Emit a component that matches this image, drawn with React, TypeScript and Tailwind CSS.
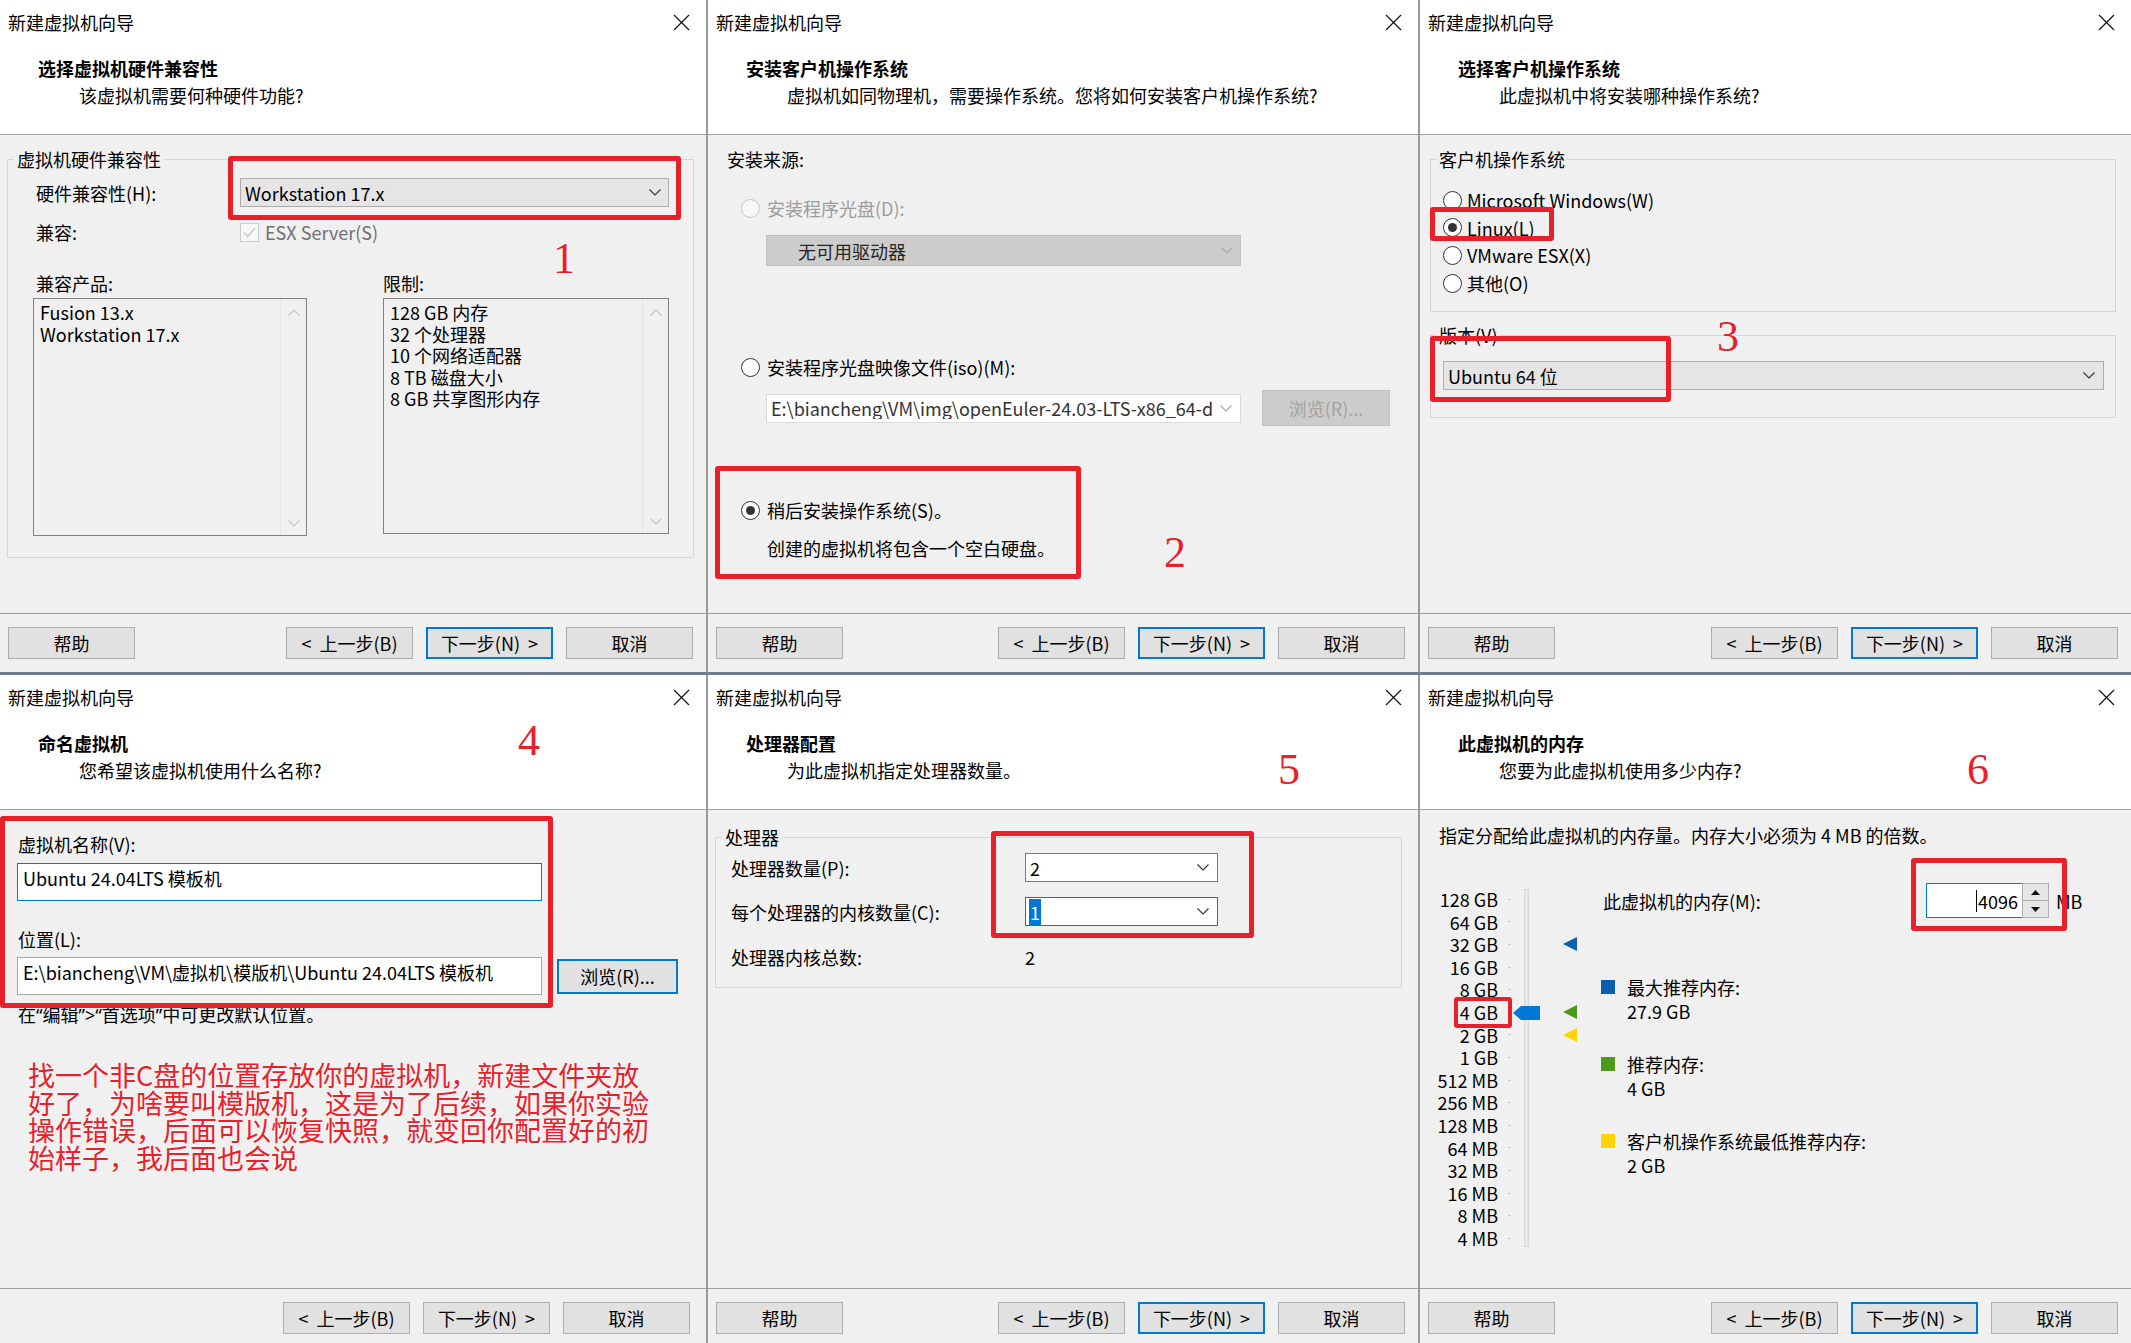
import React from "react";

// annotation red used for boxes, digits and the note
const RED = "#e8202a";

function CloseIcon() {
  return (
    <svg width="17" height="17" viewBox="0 0 17 17" className="shrink-0">
      <path d="M1 1L16 16M16 1L1 16" stroke="#111" strokeWidth="1.2" />
    </svg>
  );
}

function Chevron({ color = "#333", up = false }: { color?: string; up?: boolean }) {
  return (
    <svg width="12" height="7" viewBox="0 0 12 7" className={up ? "rotate-180" : ""}>
      <path d="M0.5 0.5L6 6L11.5 0.5" fill="none" stroke={color} strokeWidth="1.1" />
    </svg>
  );
}

function Btn({
  children,
  focused = false,
  disabled = false,
  className = "w-[127px] h-[32px]",
}: {
  children: React.ReactNode;
  focused?: boolean;
  disabled?: boolean;
  className?: string;
}) {
  const look = focused
    ? "border-2 border-[#0078d7] bg-[#e1e1e1] text-black"
    : disabled
    ? "border border-[#bfbfbf] bg-[#cccccc] text-[#a3a3a3]"
    : "border border-[#adadad] bg-[#e1e1e1] text-black";
  return (
    <div className={`flex shrink-0 items-center justify-center whitespace-pre text-[18px] leading-none ${look} ${className}`}>
      {children}
    </div>
  );
}

function Radio({ checked = false, disabled = false }: { checked?: boolean; disabled?: boolean }) {
  return (
    <span
      className={`flex h-[19px] w-[19px] shrink-0 items-center justify-center rounded-full border ${
        disabled ? "border-[#c6c6c6] bg-[#f7f7f7]" : "border-[#333333] bg-white"
      }`}
    >
      {checked && <span className="h-[9px] w-[9px] rounded-full bg-[#333333]" />}
    </span>
  );
}

function Dropdown({
  text,
  className,
}: {
  text: React.ReactNode;
  className: string;
}) {
  return (
    <div className={`flex shrink-0 items-center justify-between leading-[22px] ${className}`}>
      <span className="whitespace-nowrap">{text}</span>
      <Chevron />
    </div>
  );
}

function Listbox({ lines, className }: { lines: string[]; className: string }) {
  return (
    <div className={`flex border border-[#828282] bg-[#f0f0f0] ${className}`}>
      <div className="flex-1 pl-[6px] pt-[3px] leading-[21.6px]">
        {lines.map((l) => (
          <div key={l} className="whitespace-nowrap">
            {l}
          </div>
        ))}
      </div>
      <div className="flex w-[26px] flex-col items-center justify-between border-l border-[#e4e4e4] pb-[8px] pt-[10px]">
        <Chevron up color="#c4c4c4" />
        <Chevron color="#c4c4c4" />
      </div>
    </div>
  );
}

function Box({ className }: { className: string }) {
  return <div className={`pointer-events-none absolute rounded-[3px] border-[#e8202a] ${className}`} />;
}

function Num({ n, className }: { n: string; className: string }) {
  return (
    <div
      className={`absolute font-['Liberation_Serif',serif] text-[44px] leading-[44px] text-[#e8202a] [text-shadow:0_0_2px_#fff,0_0_1px_#fff] ${className}`}
    >
      {n}
    </div>
  );
}

function Wizard({
  heading,
  sub,
  children,
  marks,
  help = true,
  nextFocused = true,
}: {
  heading: string;
  sub: string;
  children: React.ReactNode;
  marks?: React.ReactNode;
  help?: boolean;
  nextFocused?: boolean;
}) {
  return (
    <div className="relative flex h-full flex-col overflow-hidden bg-[#f0f0f0]">
      <div className="h-[135px] shrink-0 border-b border-[#a0a0a0] bg-white">
        <div className="flex h-[44px] items-center justify-between pl-[8px] pr-[16px]">
          <span className="leading-[24px]">新建虚拟机向导</span>
          <CloseIcon />
        </div>
        <div className="mt-[12px] pl-[38px] font-bold leading-[24px]">{heading}</div>
        <div className="mt-[3px] pl-[79px] leading-[24px]">{sub}</div>
      </div>
      <div className="relative h-[478px] shrink-0">{children}</div>
      <div
        className={`flex flex-1 items-start border-t border-[#a0a0a0] pt-[13px] ${
          help ? "justify-between pl-[8px] pr-[13px]" : "justify-end pr-[16px]"
        }`}
      >
        {help && <Btn>帮助</Btn>}
        <div className="flex gap-[13px]">
          <Btn>{"<  上一步(B)"}</Btn>
          <Btn focused={nextFocused}>{"下一步(N)  >"}</Btn>
          <Btn>取消</Btn>
        </div>
      </div>
      {marks}
    </div>
  );
}

function Compat() {
  return (
    <Wizard
      heading="选择虚拟机硬件兼容性"
      sub="该虚拟机需要何种硬件功能?"
      marks={
        <>
          <Box className="left-[228px] top-[156px] h-[64px] w-[453px] border-[5px]" />
          <Num n="1" className="left-[553px] top-[237px]" />
        </>
      }
    >
      <fieldset className="ml-[7px] mr-[12px] mt-[14px] border border-[#d5d5d5] pb-[21px]">
        <legend className="ml-[6px] px-[3px] leading-[20px]">虚拟机硬件兼容性</legend>
        <div className="mt-[9px] flex h-[29px] items-center pl-[28px]">
          <span className="w-[204px] shrink-0">硬件兼容性(H):</span>
          <Dropdown
            text="Workstation 17.x"
            className="h-[29px] w-[429px] border border-[#adadad] bg-[#e5e5e5] pl-[4px] pr-[7px]"
          />
        </div>
        <div className="mt-[15px] flex h-[20px] items-center pl-[28px]">
          <span className="w-[204px] shrink-0">兼容:</span>
          <span className="flex h-[19px] w-[19px] items-center justify-center border border-[#cccccc] bg-[#f7f7f7]">
            <svg width="13" height="11" viewBox="0 0 13 11">
              <path d="M1 5.5L4.8 9.5L12 1" fill="none" stroke="#c5c5c5" strokeWidth="1.3" />
            </svg>
          </span>
          <span className="ml-[6px] text-[#707070]">ESX Server(S)</span>
        </div>
        <div className="mt-[31px] flex pl-[25px]">
          <div className="w-[274px]">
            <div className="pl-[3px] leading-[20px]">兼容产品:</div>
            <Listbox className="mt-[5px] h-[238px]" lines={["Fusion 13.x", "Workstation 17.x"]} />
          </div>
          <div className="ml-[76px] w-[286px]">
            <div className="leading-[20px]">限制:</div>
            <Listbox
              className="mt-[5px] h-[236px]"
              lines={["128 GB 内存", "32 个处理器", "10 个网络适配器", "8 TB 磁盘大小", "8 GB 共享图形内存"]}
            />
          </div>
        </div>
      </fieldset>
    </Wizard>
  );
}

function InstallSource() {
  return (
    <Wizard
      heading="安装客户机操作系统"
      sub="虚拟机如同物理机，需要操作系统。您将如何安装客户机操作系统?"
      marks={
        <>
          <Box className="left-[7px] top-[466px] h-[113px] w-[366px] border-[5px]" />
          <Num n="2" className="left-[456px] top-[531px]" />
        </>
      }
    >
      <div className="pl-[19px]">
        <div className="mt-[14px] leading-[20px]">安装来源:</div>
        <div className="ml-[14px] mt-[29px] flex h-[20px] items-center gap-[7px] text-[#9c9c9c]">
          <Radio disabled />
          安装程序光盘(D):
        </div>
        <div className="ml-[39px] mt-[17px] flex h-[31px] w-[475px] items-center justify-between border border-[#bfbfbf] bg-[#cccccc] pl-[31px] pr-[7px] text-[#262626]">
          <span>无可用驱动器</span>
          <Chevron color="#a8a8a8" />
        </div>
        <div className="ml-[14px] mt-[91px] flex h-[20px] items-center gap-[7px]">
          <Radio />
          安装程序光盘映像文件(iso)(M):
        </div>
        <div className="mt-[13px] flex h-[36px] items-center">
          <div className="ml-[39px] flex h-[29px] w-[475px] items-center border border-[#d9d9d9] bg-white pl-[4px] text-[#333333]">
            <span className="w-[441px] shrink-0 overflow-hidden whitespace-nowrap leading-[22px]">
              E:\biancheng\VM\img\openEuler-24.03-LTS-x86_64-dvd
            </span>
            <span className="flex flex-1 justify-center">
              <Chevron color="#a8a8a8" />
            </span>
          </div>
          <Btn disabled className="ml-[21px] h-[36px] w-[128px]">
            浏览(R)...
          </Btn>
        </div>
        <div className="ml-[14px] mt-[74px] flex h-[20px] items-center gap-[7px]">
          <Radio checked />
          稍后安装操作系统(S)。
        </div>
        <div className="mt-[18px] pl-[40px] leading-[20px]">创建的虚拟机将包含一个空白硬盘。</div>
      </div>
    </Wizard>
  );
}

function GuestOs() {
  const items = [
    { label: "Microsoft Windows(W)", on: false },
    { label: "Linux(L)", on: true },
    { label: "VMware ESX(X)", on: false },
    { label: "其他(O)", on: false },
  ];
  return (
    <Wizard
      heading="选择客户机操作系统"
      sub="此虚拟机中将安装哪种操作系统?"
      marks={
        <>
          <Box className="left-[10px] top-[207px] h-[34px] w-[124px] border-[5px]" />
          <Box className="left-[10px] top-[336px] h-[66px] w-[241px] border-[5px]" />
          <Num n="3" className="left-[297px] top-[315px]" />
        </>
      }
    >
      <fieldset className="ml-[10px] mr-[15px] mt-[14px] border border-[#d5d5d5] pb-[18px]">
        <legend className="ml-[6px] px-[2px] leading-[20px]">客户机操作系统</legend>
        <div className="mt-[21px] flex flex-col gap-[7.7px] pl-[12px]">
          {items.map((it) => (
            <div key={it.label} className="flex h-[20px] items-center gap-[5px]">
              <Radio checked={it.on} />
              {it.label}
            </div>
          ))}
        </div>
      </fieldset>
      <fieldset className="ml-[10px] mr-[15px] mt-[13px] border border-[#d5d5d5] pb-[27px]">
        <legend className="ml-[6px] px-[2px] leading-[20px]">版本(V)</legend>
        <Dropdown
          text="Ubuntu 64 位"
          className="ml-[12px] mt-[16px] h-[29px] w-[661px] border border-[#adadad] bg-[#e5e5e5] pl-[4px] pr-[8px]"
        />
      </fieldset>
    </Wizard>
  );
}

function NameVm() {
  const q = "font-['Noto_Sans',sans-serif]";
  return (
    <Wizard
      heading="命名虚拟机"
      sub="您希望该虚拟机使用什么名称?"
      help={false}
      nextFocused={false}
      marks={
        <>
          <Box className="left-0 top-[141px] h-[192px] w-[553px] border-[5px]" />
          <Num n="4" className="left-[518px] top-[44px]" />
        </>
      }
    >
      <div className="pl-[18px]">
        <div className="mt-[24px] leading-[20px]">虚拟机名称(V):</div>
        <div className="-ml-px mt-[9px] h-[38px] w-[525px] border border-[#0078d7] bg-white pl-[5px] pt-[3px] leading-[22px]">
          Ubuntu 24.04LTS 模板机
        </div>
        <div className="mt-[28px] leading-[20px]">位置(L):</div>
        <div className="mt-[8px] flex items-center">
          <div className="-ml-px h-[38px] w-[525px] border border-[#a8a8a8] bg-white pl-[5px] pt-[3px] leading-[22px] whitespace-nowrap">
            E:\biancheng\VM\虚拟机\模版机\Ubuntu 24.04LTS 模板机
          </div>
          <Btn focused className="ml-[15px] h-[35px] w-[121px]">
            浏览(R)...
          </Btn>
        </div>
        <div className="mt-[9px] leading-[20px]">
          在<span className={q}>“</span>编辑<span className={q}>”&gt;“</span>首选项<span className={q}>”</span>中可更改默认位置。
        </div>
        <div
          className="mt-[36px] pl-[10px] text-[27px] leading-[27.7px] [text-shadow:0_0_2px_#fff]"
          style={{ color: RED }}
        >
          找一个非C盘的位置存放你的虚拟机，新建文件夹放
          <br />
          好了，为啥要叫模版机，这是为了后续，如果你实验
          <br />
          操作错误，后面可以恢复快照，就变回你配置好的初
          <br />
          始样子，我后面也会说
        </div>
      </div>
    </Wizard>
  );
}

function Cpu() {
  return (
    <Wizard
      heading="处理器配置"
      sub="为此虚拟机指定处理器数量。"
      marks={
        <>
          <Box className="left-[283px] top-[156px] h-[107px] w-[263px] border-[5px]" />
          <Num n="5" className="left-[570px] top-[73px]" />
        </>
      }
    >
      <fieldset className="ml-[7px] mr-[16px] mt-[17px] border border-[#d5d5d5] pb-[20px]">
        <legend className="ml-[6px] px-[3px] leading-[20px]">处理器</legend>
        <div className="mt-[6px] flex h-[29px] items-center pl-[15px]">
          <span className="w-[294px] shrink-0">处理器数量(P):</span>
          <Dropdown
            text="2"
            className="h-[29px] w-[193px] border border-[#7a7a7a] bg-white pl-[4px] pr-[8px]"
          />
        </div>
        <div className="mt-[15px] flex h-[29px] items-center pl-[15px]">
          <span className="w-[294px] shrink-0">每个处理器的内核数量(C):</span>
          <Dropdown
            text={<span className="bg-[#0078d7] px-px text-white">1</span>}
            className="h-[29px] w-[193px] border border-[#0078d7] bg-white pl-[3px] pr-[8px]"
          />
        </div>
        <div className="mt-[21px] flex h-[20px] items-center pl-[15px]">
          <span className="w-[294px] shrink-0">处理器内核总数:</span>
          <span>2</span>
        </div>
      </fieldset>
    </Wizard>
  );
}

function Tri({ color }: { color: string }) {
  return (
    <svg width="14" height="14" viewBox="0 0 14 14">
      <polygon points="0,7 14,0 14,14" fill={color} />
    </svg>
  );
}

function Memory() {
  const sizes = [
    "128 GB", "64 GB", "32 GB", "16 GB", "8 GB", "4 GB", "2 GB", "1 GB",
    "512 MB", "256 MB", "128 MB", "64 MB", "32 MB", "16 MB", "8 MB", "4 MB",
  ];
  const marker: Record<number, string> = { 2: "#0b5fae", 5: "#4c9a1c", 6: "#ffd400" };
  const legend = [
    { color: "#0b5fae", title: "最大推荐内存:", value: "27.9 GB" },
    { color: "#4c9a1c", title: "推荐内存:", value: "4 GB" },
    { color: "#ffd400", title: "客户机操作系统最低推荐内存:", value: "2 GB" },
  ];
  return (
    <Wizard
      heading="此虚拟机的内存"
      sub="您要为此虚拟机使用多少内存?"
      marks={
        <>
          <Box className="left-[491px] top-[183px] h-[73px] w-[156px] border-[5px]" />
          <Box className="left-[34px] top-[322px] h-[31px] w-[58px] border-[4px]" />
          <Num n="6" className="left-[547px] top-[73px]" />
        </>
      }
    >
      <div className="mt-[15px] pl-[19px] leading-[20px]">
        指定分配给此虚拟机的内存量。内存大小必须为 4 MB 的倍数。
      </div>
      <div className="mt-[38px] flex">
        <div className="w-[78px] shrink-0 pt-[5px] text-right">
          {sizes.map((s) => (
            <div key={s} className="h-[22.6px] whitespace-nowrap leading-[22.6px]">
              {s}
            </div>
          ))}
        </div>
        <div className="ml-[10px] w-[3px] shrink-0 pt-[5px]">
          {sizes.map((s) => (
            <div key={s} className="flex h-[22.6px] items-center">
              <div className="h-px w-[3px] bg-[#c8c8c8]" />
            </div>
          ))}
        </div>
        <div className="relative ml-[13px] mt-[6px] h-[358px] w-[5px] shrink-0 border border-[#d6d6d6] bg-[#e7e7e7]">
          <svg width="27" height="14" viewBox="0 0 27 14" className="absolute left-[-12px] top-[116px]">
            <polygon points="0,7 8,0 27,0 27,14 8,14" fill="#0078d7" />
          </svg>
        </div>
        <div className="ml-[34px] w-[14px] shrink-0 pt-[5px]">
          {sizes.map((s, i) => (
            <div key={s} className="flex h-[22.6px] items-center">
              {marker[i] && <Tri color={marker[i]} />}
            </div>
          ))}
        </div>
        <div className="ml-[24px] flex flex-col">
          <div className="flex h-[35px] items-center">
            <span className="w-[325px] shrink-0 pl-[2px]">此虚拟机的内存(M):</span>
            <div className="flex h-[35px]">
              <div className="flex w-[96px] items-center justify-end border border-r-0 border-[#0078d7] bg-white pr-[4px] leading-[22px]">
                <span className="border-l border-black pl-px">4096</span>
              </div>
              <div className="flex w-[27px] flex-col border border-[#adadad] bg-[#e6e6e6]">
                <div className="flex flex-1 items-center justify-center border-b border-[#adadad]">
                  <svg width="9" height="5" viewBox="0 0 9 5">
                    <polygon points="0,5 4.5,0 9,5" fill="#111" />
                  </svg>
                </div>
                <div className="flex flex-1 items-center justify-center">
                  <svg width="9" height="5" viewBox="0 0 9 5">
                    <polygon points="0,0 9,0 4.5,5" fill="#111" />
                  </svg>
                </div>
              </div>
            </div>
            <span className="ml-[7px]">MB</span>
          </div>
          {legend.map((l, i) => (
            <div key={l.title} className={i === 0 ? "mt-[57px]" : "mt-[29px]"}>
              <div className="flex h-[24px] items-center">
                <span className="h-[14px] w-[14px] shrink-0" style={{ backgroundColor: l.color }} />
                <span className="ml-[12px] whitespace-nowrap leading-[24px]">{l.title}</span>
              </div>
              <div className="pl-[26px] leading-[24px]">{l.value}</div>
            </div>
          ))}
        </div>
      </div>
    </Wizard>
  );
}

export default function App() {
  return (
    <div className="flex h-[1343px] w-[2131px] flex-col gap-[3px] overflow-hidden bg-[#6d7c90] font-['Noto_Sans_CJK_SC','Noto_Sans',sans-serif] text-[18px] leading-[20px] text-black">
      <div className="grid h-[672px] shrink-0 grid-cols-[706px_710px_711px] gap-x-[2px] bg-[#9a9a9a]">
        <Compat />
        <InstallSource />
        <GuestOs />
      </div>
      <div className="grid h-[668px] shrink-0 grid-cols-[706px_710px_711px] gap-x-[2px] bg-[#9a9a9a]">
        <NameVm />
        <Cpu />
        <Memory />
      </div>
    </div>
  );
}
